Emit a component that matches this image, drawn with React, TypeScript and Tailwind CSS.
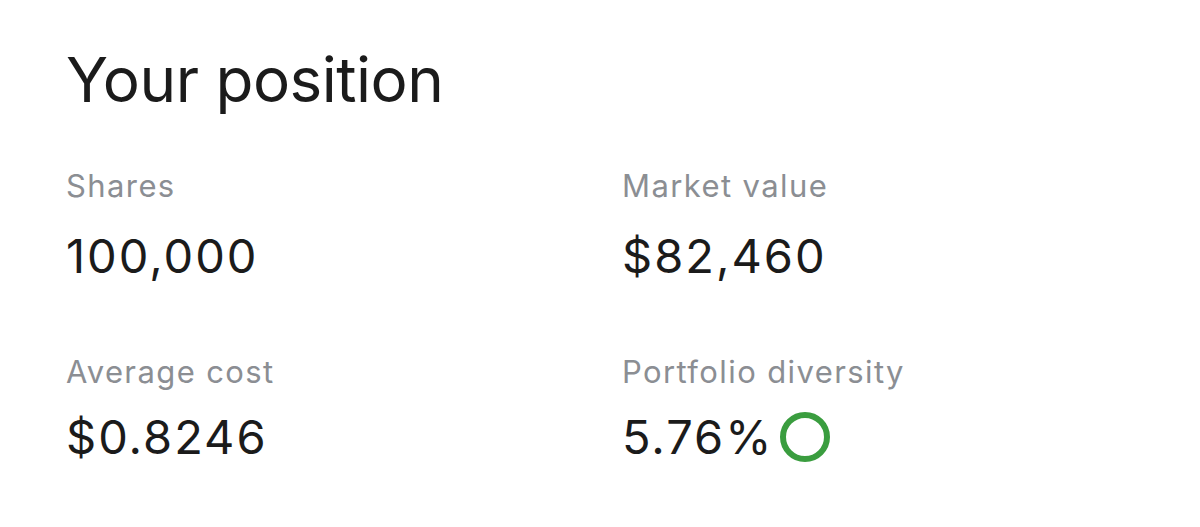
import React from "react";

function Stat({
  label,
  value,
  extra,
  gap,
}: {
  label: string;
  value: string;
  extra?: React.ReactNode;
  gap: string;
}) {
  return (
    <div className="flex flex-col">
      <div className="text-[31px] leading-[36px] tracking-[1.4px] text-[#8b8e93]">{label}</div>
      <div className={`${gap} flex items-center gap-[7px] text-[47px] leading-[56px] tracking-[2px] text-[#1b1b1b]`}>
        <span>{value}</span>
        {extra}
      </div>
    </div>
  );
}

export default function App() {
  return (
    <div
      className="w-[1200px] h-[527px] bg-white overflow-hidden pl-[66px] pt-[40px]"
      style={{ fontFamily: "Inter, 'Noto Sans', sans-serif" }}
    >
      <h1 className="text-[62px] leading-[80px] text-[#1b1b1b] tracking-[-0.5px]">Your position</h1>
      <div className="mt-[48px] grid grid-cols-[556px_1fr] gap-y-[70px]">
        <Stat label="Shares" value="100,000" gap="mt-[24px]" />
        <Stat label="Market value" value="$82,460" gap="mt-[24px]" />
        <Stat label="Average cost" value="$0.8246" gap="mt-[19px]" />
        <Stat
          label="Portfolio diversity"
          value="5.76%"
          gap="mt-[19px]"
          extra={<span className="block w-[50px] h-[50px] rounded-full border-[6px] border-[#3a9d3f]" />}
        />
      </div>
    </div>
  );
}
